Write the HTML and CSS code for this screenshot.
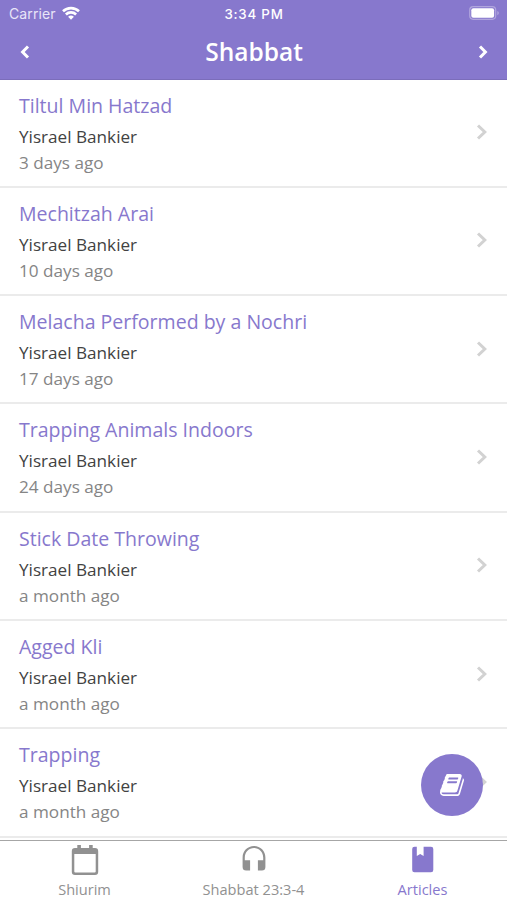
FILE: index.html
```html
<!DOCTYPE html>
<html lang="en">
<head>
<meta charset="utf-8">
<title>Shabbat</title>
<link rel="stylesheet" href="styles.css">
</head>
<body>
<div class="app">
  <header class="header">
    <div class="status">
      <div class="carrier"><span>Carrier</span>
        <svg class="wifi" viewBox="0 0 18 14"><path d="M9 13.7 6.1 10.8a4.2 4.2 0 0 1 5.8 0z" fill="#fff"/><path d="M1 5.3a11.6 11.6 0 0 1 16 0M3.9 8.5a7.3 7.3 0 0 1 10.2 0" fill="none" stroke="#fff" stroke-width="2.6"/></svg>
      </div>
      <div class="time">3:34 PM</div>
      <svg class="battery" viewBox="0 0 31 14"><rect x=".7" y=".7" width="26" height="12.6" rx="3.5" fill="none" stroke="#b0a5dd" stroke-width="1.2"/><rect x="2.3" y="2.3" width="22.8" height="9.4" rx="2" fill="#fff"/><path d="M28.3 5v4.2q1.6-.6 1.6-2.1t-1.6-2.1" fill="#b0a5dd"/></svg>
    </div>
    <nav class="nav">
      <svg class="arrow" viewBox="0 0 10 14"><path d="M8 1.5 2.6 7 8 12.5"/></svg>
      <h1>Shabbat</h1>
      <svg class="arrow" viewBox="0 0 10 14"><path d="M2 1.5 7.4 7 2 12.5"/></svg>
    </nav>
  </header>
  <main class="list">
    <article class="row"><div><h2>Tiltul Min Hatzad</h2><p class="author">Yisrael Bankier</p><p class="date">3 days ago</p></div><svg class="chevron" viewBox="0 0 12 16"><path d="M2 1.5 8.8 8 2 14.5"/></svg></article>
    <article class="row"><div><h2>Mechitzah Arai</h2><p class="author">Yisrael Bankier</p><p class="date">10 days ago</p></div><svg class="chevron" viewBox="0 0 12 16"><path d="M2 1.5 8.8 8 2 14.5"/></svg></article>
    <article class="row"><div><h2>Melacha Performed by a Nochri</h2><p class="author">Yisrael Bankier</p><p class="date">17 days ago</p></div><svg class="chevron" viewBox="0 0 12 16"><path d="M2 1.5 8.8 8 2 14.5"/></svg></article>
    <article class="row"><div><h2>Trapping Animals Indoors</h2><p class="author">Yisrael Bankier</p><p class="date">24 days ago</p></div><svg class="chevron" viewBox="0 0 12 16"><path d="M2 1.5 8.8 8 2 14.5"/></svg></article>
    <article class="row"><div><h2>Stick Date Throwing</h2><p class="author">Yisrael Bankier</p><p class="date">a month ago</p></div><svg class="chevron" viewBox="0 0 12 16"><path d="M2 1.5 8.8 8 2 14.5"/></svg></article>
    <article class="row"><div><h2>Agged Kli</h2><p class="author">Yisrael Bankier</p><p class="date">a month ago</p></div><svg class="chevron" viewBox="0 0 12 16"><path d="M2 1.5 8.8 8 2 14.5"/></svg></article>
    <article class="row"><div><h2>Trapping</h2><p class="author">Yisrael Bankier</p><p class="date">a month ago</p></div><svg class="chevron" viewBox="0 0 12 16"><path d="M2 1.5 8.8 8 2 14.5"/></svg></article>
  </main>
  <button class="fab" aria-label="Open book">
    <svg viewBox="0 0 1664 1792"><path fill="#fff" d="M1639 478q40 57 18 129l-275 906q-19 64-76.5 107.5t-122.5 43.5h-923q-77 0-148.5-53.5t-99.5-131.5q-24-67-2-127 0-4 3-27t4-37q1-8-3-21.5t-3-19.5q2-11 8-21t16.5-23.5 16.5-23.5q23-38 45-91.5t30-91.5q3-10 .5-30t-.5-28q3-11 17-28t17-23q21-36 42-92t25-90q1-9-2.5-32t.5-28q4-13 22-30.5t22-22.5q19-26 42.5-84.5t27.5-96.5q1-8-3-25.5t-2-26.5q2-8 9-18t18-23 17-21q8-12 16.5-30.5t15-35 16-36 19.5-32 26.5-23.5 36-11.5 47.5 5.5l-1 3q38-9 51-9h761q74 0 114 56t18 130l-274 906q-36 119-71.5 153.5t-128.5 34.5h-869q-27 0-38 15-11 16-1 43 24 70 144 70h923q29 0 56-15.5t35-41.5l300-987q7-22 5-57 38 15 59 43zm-1064 2q-4 13 2 22.5t20 9.5h608q13 0 25.5-9.5t16.5-22.5l21-64q4-13-2-22.5t-20-9.5h-608q-13 0-25.5 9.5t-16.5 22.5zm-83 256q-4 13 2 22.5t20 9.5h608q13 0 25.5-9.5t16.5-22.5l21-64q4-13-2-22.5t-20-9.5h-608q-13 0-25.5 9.5t-16.5 22.5z"/></svg>
  </button>
  <footer class="tabs">
    <div class="tab">
      <svg viewBox="0 0 32 32"><path fill="currentColor" fill-rule="evenodd" d="M8.3 1h3.6v3h8.2V1h3.6v3H26q3.2 0 3.2 3.2v20.600q0 3.200-3.200 3.200H6q-3.200 0-3.200-3.200V7.200Q2.800 4 6 4h2.300zM5.300 10v17.400q0 1 1 1h19.400q1 0 1-1V10z"/></svg>
      <span>Shiurim</span>
    </div>
    <div class="tab">
      <svg viewBox="0 0 32 32"><path fill="currentColor" d="M16 2C9.5 2 4.6 7 4.6 13.4V23q0 3.5 3.5 3.5h4V16.3H6.8v-2.9C6.8 8 11 4 16 4s9.2 4 9.2 9.4v2.9h-5.3v10.2h4q3.5 0 3.5-3.5v-9.6C27.4 7 22.5 2 16 2z"/></svg>
      <span>Shabbat 23:3-4</span>
    </div>
    <div class="tab active">
      <svg viewBox="0 0 32 32"><path fill="currentColor" d="M7.5 2.800h2.300v9.200l3.400-2.100 3.400 2.100V2.800h7.400q2.300 0 2.300 2.300v20.800q0 2.300-2.300 2.300H7.500q-2.300 0-2.300-2.300V5.100Q5.200 2.800 7.500 2.800z"/></svg>
      <span>Articles</span>
    </div>
  </footer>
</div>
</body>
</html>
```
FILE: styles.css
```css
* { box-sizing: border-box; }
body { margin: 0; background: #fff; font-family: "Open Sans", sans-serif; }
h1, h2, p { margin: 0; font-weight: 400; }
svg { display: block; flex: none; }
.app { position: relative; height: 900px; display: flex; flex-direction: column; overflow: hidden; }
.header { height: 79.5px; flex: none; background: #8778cd; border-bottom: 1px solid #7b6dba; color: #fff; }
.status { height: 27px; display: grid; grid-template-columns: 1fr auto 1fr; align-items: center; padding: 0 8px 0 9px; font-family: Inter, sans-serif; }
.carrier { display: flex; align-items: center; gap: 6px; font-size: 14px; color: #e9e5f8; letter-spacing: .1px; }
.wifi { width: 18px; height: 14px; margin-top: -1px; }
.time { font-size: 13.3px; font-weight: 500; letter-spacing: .8px; color: #fff; }
.battery { width: 31px; height: 14px; justify-self: end; margin: -1px -1px 0 0; }
.nav { height: 50px; display: flex; align-items: center; justify-content: space-between; padding: 0 19px 0 20px; }
.nav h1 { font-size: 24.5px; font-weight: 600; line-height: 50px; }
.arrow { width: 10px; height: 14px; fill: none; stroke: #fff; stroke-width: 3; }
.list { flex: 1; min-height: 0; overflow: hidden; }
.row { height: 108.33px; border-bottom: 2px solid #ebebeb; padding: 11px 19px 0 19px; display: flex; justify-content: space-between; }
.row h2 { font-size: 19.55px; line-height: 30px; color: #8778cd; }
.row p { font-size: 17.15px; line-height: 26px; }
.row .author { color: #424242; margin-top: 3px; }
.row .date { color: #858585; }
.chevron { width: 12px; height: 16px; margin-top: 33.5px; fill: none; stroke: #d2d2d2; stroke-width: 3; }
.fab { position: absolute; left: 421px; top: 754px; width: 62px; height: 62px; border: 0; border-radius: 50%; background: #8778cd; padding: 0; display: grid; place-items: center; }
.fab svg { width: 24px; height: 26px; }
.tabs { height: 60.5px; flex: none; border-top: 1px solid #a6a6a6; display: grid; grid-template-columns: repeat(3, 1fr); background: #fff; }
.tab { display: flex; flex-direction: column; align-items: center; padding-top: 3px; color: #919191; font-size: 14.6px; line-height: 20px; }
.tab svg { width: 32px; height: 32px; }
.tab span { margin-top: 3.5px; }
.tab.active { color: #8778cd; }
```
